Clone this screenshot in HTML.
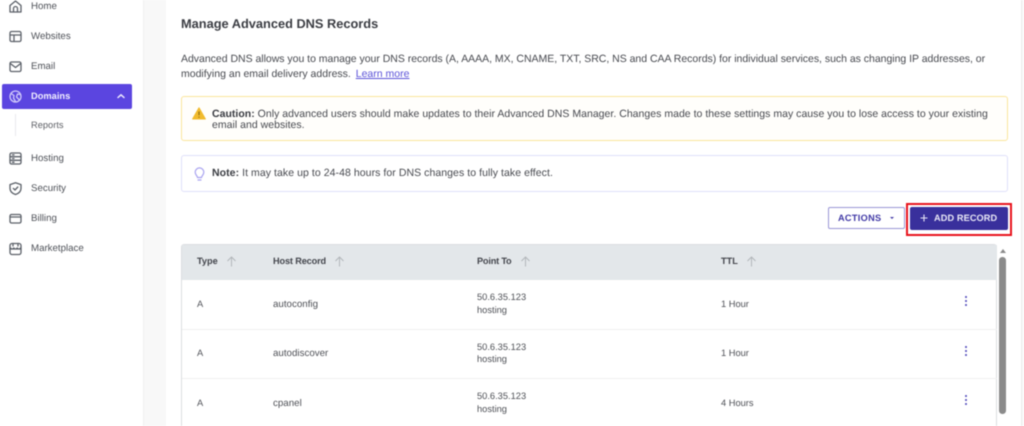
<!DOCTYPE html>
<html lang="en"><head><meta charset="utf-8"><title>Manage Advanced DNS Records</title>
<style>
html,body{margin:0;padding:0;width:1024px;height:426px;overflow:hidden;background:#fff}
body{font-family:"Liberation Sans",sans-serif;color:#4a4a52;text-rendering:geometricPrecision}
#w{position:absolute;left:0;top:0;width:1024px;height:426px;overflow:hidden;filter:blur(.45px)}
.a{position:absolute;white-space:nowrap}
.n{font-size:9.7px;line-height:12px;color:#4d5057;left:31px}
.i{position:absolute;left:8px;width:15px;height:15px;fill:none;stroke:#5b6068;stroke-width:1.3;stroke-linecap:round;stroke-linejoin:round}
.p{font-size:10.5px;line-height:14px;color:#47494f;left:181px}
.b{font-weight:bold;color:#3a3c42}
.t{font-size:9.3px;line-height:12px;color:#4e5056}
.v{font-size:9.75px;margin-top:1px}
.h{font-size:9.2px;line-height:12px;color:#44464d;font-weight:bold}
.ar{position:absolute;width:11px;height:11px;fill:none;stroke:#b3b7bb;stroke-width:1}
.d{position:absolute;left:965px;width:2.4px;height:2.4px;border-radius:50%;background:#4a42b8}
.r{position:absolute;left:182px;width:815px;height:1px;background:#f0f0f0}
</style></head><body><div id="w">
<div class="a" style="left:143px;top:0;width:23px;height:426px;background:#f8f8f8;border-left:1px solid #f0f0f0;box-sizing:border-box"></div>
<div class="a" style="left:1021px;top:0;width:3px;height:426px;background:#f9f9f9;border-left:1px solid #ececec;box-sizing:border-box"></div>

<svg class="i" style="top:-1px" viewBox="0 0 15 15"><path d="M2 6.5 7.5 2 13 6.5V13H2Z"/><path d="M5.5 13V9.5a2 2 0 0 1 4 0V13"/></svg>
<div class="a n" style="top:.5px">Home</div>
<svg class="i" style="top:29px" viewBox="0 0 15 15"><rect x="2" y="2.5" width="11" height="10" rx="1.5"/><path d="M2 6H13M6 6V12.5"/></svg>
<div class="a n" style="top:30.5px">Websites</div>
<svg class="i" style="top:59px" viewBox="0 0 15 15"><rect x="2" y="3" width="11" height="9.5" rx="1.5"/><path d="M2.3 4.5 7.5 8.5 12.7 4.5"/></svg>
<div class="a n" style="top:60.5px">Email</div>

<div class="a" style="left:2px;top:84px;width:130px;height:25px;background:#5b45e0;border-radius:2px"></div>
<svg class="i" style="top:89px;stroke:#cfc8fa" viewBox="0 0 15 15"><circle cx="7.5" cy="7.5" r="5.5"/><path d="M3 4.5 6 6.5 5.5 9 7.5 12.5M12.500 5.500 9.500 5 8.500 8 11 10.500"/></svg>
<div class="a n" style="top:90px;color:#f1efff;font-weight:bold;font-size:9.3px">Domains</div>
<svg class="a" style="left:116px;top:92px" width="10" height="8" viewBox="0 0 10 8" fill="none" stroke="#eeeaff" stroke-width="1.5" stroke-linecap="round" stroke-linejoin="round"><path d="M2 5.5 5 2.8 8 5.5"/></svg>

<div class="a" style="left:15px;top:114px;width:1px;height:22px;background:#e9e9ec"></div>
<div class="a n" style="top:119px;font-size:9.3px;color:#5d5f65">Reports</div>

<svg class="i" style="top:151px" viewBox="0 0 15 15"><rect x="2" y="2" width="11" height="11" rx="1.5"/><path d="M2 5.7H13M2 9.3H13M4.5 3.9H6M4.5 7.5H6M4.5 11.2H6"/></svg>
<div class="a n" style="top:153px">Hosting</div>
<svg class="i" style="top:181px" viewBox="0 0 15 15"><path d="M7.5 1.8 13 3.6V7.5C13 10.5 10.5 12.5 7.5 13.5 4.500 12.500 2 10.500 2 7.500V3.600Z"/><path d="M5.3 7.4 7 9 9.8 6"/></svg>
<div class="a n" style="top:183px">Security</div>
<svg class="i" style="top:211px" viewBox="0 0 15 15"><rect x="2" y="3.5" width="11" height="8.5" rx="1.5"/><path d="M2 6H13"/></svg>
<div class="a n" style="top:213px">Billing</div>
<svg class="i" style="top:241px" viewBox="0 0 15 15"><rect x="2" y="2.5" width="11" height="11" rx="2"/><path d="M2 8H13M2.3 7c1.300 1.300 2.500 1.300 3.500 0 1 1.300 2.300 1.300 3.400 0 1 1.300 2.300 1.300 3.500 0M5 2.500V5M10 2.500V5"/></svg>
<div class="a n" style="top:243px">Marketplace</div>

<div class="a" style="left:181px;top:15px;font-size:12.8px;line-height:18px;font-weight:bold;color:#3a3c42">Manage Advanced DNS Records</div>
<div class="a p" style="top:52px;letter-spacing:-.02px">Advanced DNS allows you to manage your DNS records (A, AAAA, MX, CNAME, TXT, SRC, NS and CAA Records) for individual services, such as changing IP addresses, or</div>
<div class="a p" style="top:67px">modifying an email delivery address. <span style="color:#5b52d8;text-decoration:underline;margin-left:2px">Learn more</span></div>

<div class="a" style="left:181px;top:96px;width:827px;height:45px;box-sizing:border-box;border:1.3px solid #fbe59d;border-radius:3px;background:#fffefb"></div>
<svg class="a" style="left:192px;top:107px" width="14" height="13" viewBox="0 0 14 13"><path d="M7 .8 13.4 12H.6Z" fill="#f1bb2e" stroke="#f1bb2e" stroke-linejoin="round"/><path d="M7 4.5V8.3M7 9.6V10.6" stroke="#8a6a10" stroke-width="1.1"/></svg>
<div class="a p" style="left:212px;top:107px;letter-spacing:.02px"><span class="b">Caution:</span> Only advanced users should make updates to their Advanced DNS Manager. Changes made to these settings may cause you to lose access to your existing</div>
<div class="a p" style="left:212px;top:118px;letter-spacing:.02px">email and websites.</div>

<div class="a" style="left:181px;top:155px;width:827px;height:37px;box-sizing:border-box;border:1.3px solid #dfe0fa;border-radius:3px;background:#fff"></div>
<svg class="a" style="left:193px;top:166px" width="13" height="16" viewBox="0 0 13 16" fill="none" stroke="#a9a3f0" stroke-width="1.2" stroke-linecap="round"><path d="M4.5 11.5C4.2 9.5 2.2 8.8 2.2 6.2a4.3 4.3 0 0 1 8.6 0C10.8 8.8 8.8 9.5 8.5 11.5Z"/><path d="M5 14H8"/></svg>
<div class="a p" style="left:212px;top:166px;letter-spacing:.06px"><span class="b">Note:</span> It may take up to 24-48 hours for DNS changes to fully take effect.</div>

<div class="a" style="left:828px;top:207px;width:77px;height:22px;box-sizing:border-box;border:1.2px solid #9b96d6;border-radius:2px;background:#fff"></div>
<div class="a" style="left:838px;top:212px;font-size:9.2px;line-height:12px;font-weight:bold;color:#3f37a5;letter-spacing:.3px">ACTIONS</div>
<div class="a" style="left:890px;top:217px;border-left:2.5px solid transparent;border-right:2.5px solid transparent;border-top:2.5px solid #3f37a5"></div>

<div class="a" style="left:906px;top:202.5px;width:106px;height:33px;box-sizing:border-box;border:2px solid #e8141c"></div>
<div class="a" style="left:910px;top:207px;width:98px;height:23px;background:#39309c;border-radius:2px"></div>
<svg class="a" style="left:919px;top:213px" width="10" height="10" viewBox="0 0 10 10" stroke="#e6e4f6" stroke-width="1.1"><path d="M5 1.5V8.5M1.5 5H8.5"/></svg>
<div class="a" style="left:934px;top:212px;font-size:9.2px;line-height:12px;font-weight:bold;color:#e9e8f6;letter-spacing:.1px">ADD RECORD</div>

<div class="a" style="left:181px;top:244px;width:816px;height:190px;box-sizing:border-box;border:1px solid #dcdee1;border-radius:3px;background:#fff"></div>
<div class="a" style="left:182px;top:245px;width:815px;height:35px;background:#e3e7ea"></div>

<div class="a h" style="left:197px;top:255px">Type</div>
<svg class="ar" style="left:226px;top:256px" viewBox="0 0 11 11"><path d="M5.5 10.5V1M1.5 5 5.5 1 9.5 5"/></svg>
<div class="a h" style="left:273px;top:255px;letter-spacing:-.15px">Host Record</div>
<svg class="ar" style="left:334px;top:256px" viewBox="0 0 11 11"><path d="M5.5 10.5V1M1.5 5 5.5 1 9.5 5"/></svg>
<div class="a h" style="left:477px;top:255px;letter-spacing:-.2px">Point To</div>
<svg class="ar" style="left:520px;top:256px" viewBox="0 0 11 11"><path d="M5.5 10.5V1M1.5 5 5.5 1 9.5 5"/></svg>
<div class="a h" style="left:721px;top:255px">TTL</div>
<svg class="ar" style="left:746px;top:256px" viewBox="0 0 11 11"><path d="M5.5 10.5V1M1.5 5 5.5 1 9.5 5"/></svg>

<div class="a t" style="left:197px;top:298px">A</div>
<div class="a t v" style="left:273px;top:298px">autoconfig</div>
<div class="a t" style="left:477px;top:291px">50.6.35.123</div>
<div class="a t" style="left:477px;top:304px">hosting</div>
<div class="a t" style="left:721px;top:298px">1 Hour</div>
<div class="d" style="top:296px"></div><div class="d" style="top:300px"></div><div class="d" style="top:304px"></div>
<div class="r" style="top:329px"></div>

<div class="a t" style="left:197px;top:347px">A</div>
<div class="a t v" style="left:273px;top:347px">autodiscover</div>
<div class="a t" style="left:477px;top:341px">50.6.35.123</div>
<div class="a t" style="left:477px;top:353px">hosting</div>
<div class="a t" style="left:721px;top:347px">1 Hour</div>
<div class="d" style="top:346px"></div><div class="d" style="top:350px"></div><div class="d" style="top:354px"></div>
<div class="r" style="top:378px"></div>

<div class="a t" style="left:197px;top:397px">A</div>
<div class="a t v" style="left:273px;top:397px">cpanel</div>
<div class="a t" style="left:477px;top:390px">50.6.35.123</div>
<div class="a t" style="left:477px;top:403px">hosting</div>
<div class="a t" style="left:721px;top:397px">4 Hours</div>
<div class="d" style="top:395px"></div><div class="d" style="top:399px"></div><div class="d" style="top:403px"></div>

<div class="a" style="left:999.5px;top:249px;border-left:3px solid transparent;border-right:3px solid transparent;border-bottom:4px solid #8a8a8a"></div>
<div class="a" style="left:999px;top:257px;width:6.5px;height:157px;background:#8b8b8b;border-radius:3.25px"></div>
</div></body></html>
